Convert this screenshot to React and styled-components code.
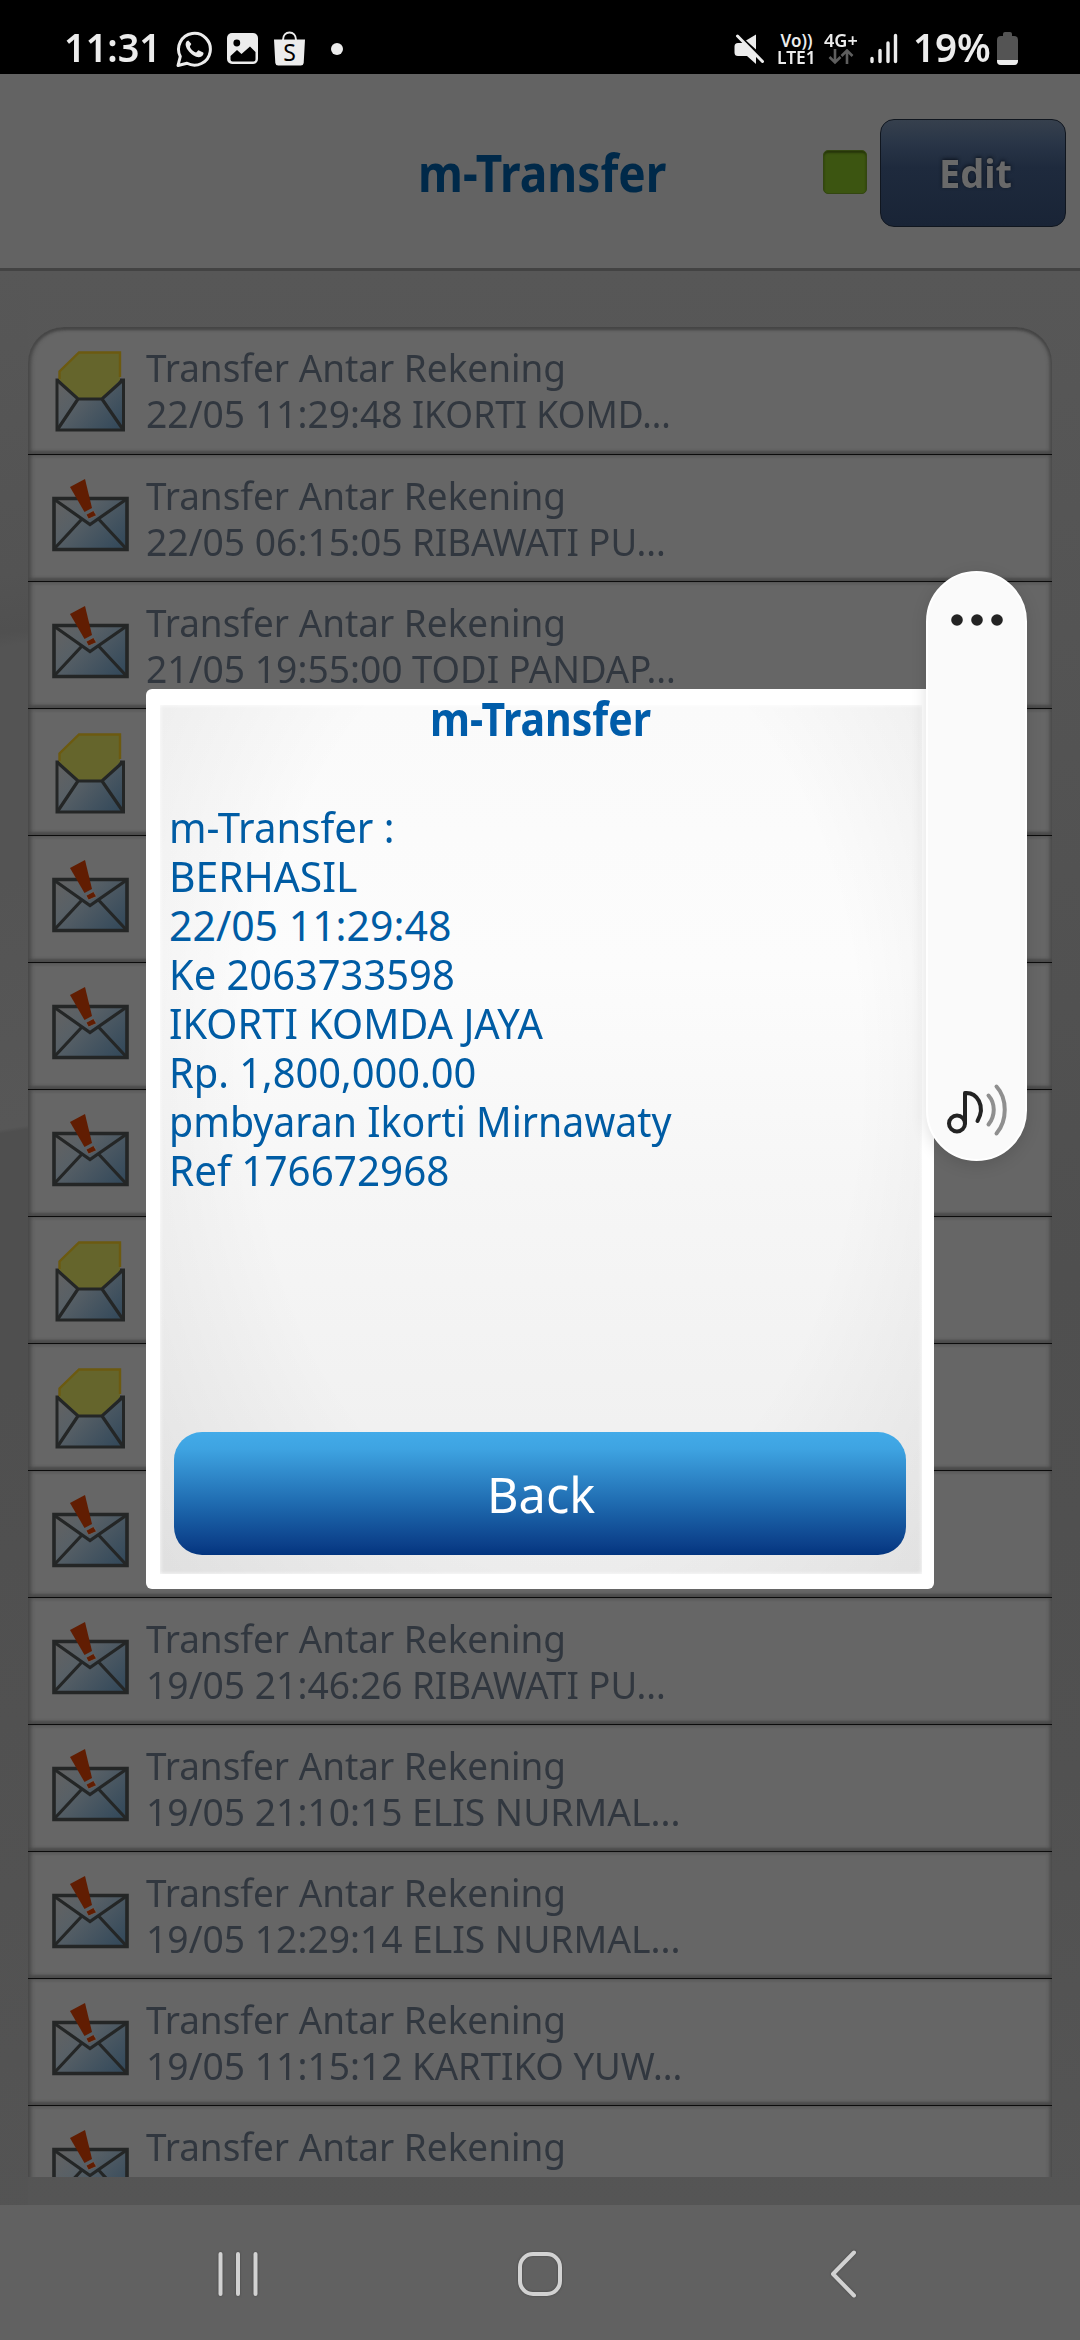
import React, { useLayoutEffect, useRef, useState } from 'react';
import styled, { createGlobalStyle, css } from 'styled-components';

const GlobalStyle = createGlobalStyle`
  * { box-sizing: border-box; }
  body { margin: 0; background: #000; font-family: "Noto Sans", "Open Sans", sans-serif; }
  svg { display: block; flex: none; }
`;

const Screen = styled.div`
  position: relative;
  width: 1080px;
  height: 2340px;
  overflow: hidden;
  display: flex;
  flex-direction: column;
`;

/* Text condensed to a given advance width */
const FitBox = styled.span`
  display: block;
  flex: none;
  width: ${(p) => p.$width}px;
  white-space: pre;
`;
const FitInner = styled.span`
  display: block;
  width: max-content;
  transform-origin: 0 50%;
`;
function Fit({ width, children }) {
  const ref = useRef(null);
  const [scale, setScale] = useState(1);
  useLayoutEffect(() => {
    setScale(width / ref.current.offsetWidth);
  }, [width, children]);
  return (
    <FitBox $width={width}>
      <FitInner ref={ref} style={{ transform: `scaleX(${scale})` }}>{children}</FitInner>
    </FitBox>
  );
}

/* ---------- status bar ---------- */
const StatusBar = styled.div`
  height: 74px;
  padding: 23px 62px 0 64px;
  display: flex;
  align-items: center;
  justify-content: space-between;
  background: #000;
  color: #ececec;
`;
const StatusGroup = styled.div`
  display: flex;
  align-items: center;
  gap: ${(p) => p.$gap}px;
  margin-left: ${(p) => p.$inset || 0}px;
`;
const StatusText = styled.div`
  font-size: 39px;
  line-height: 50px;
  font-weight: 600;
  margin-top: -3px;
`;
const Dot = styled.i`
  width: 12px;
  height: 12px;
  border-radius: 50%;
  background: #ececec;
  margin-left: 10px;
`;
const Tiny = styled.div`
  display: flex;
  flex-direction: column;
  align-items: center;
  font-size: 17px;
  line-height: 17px;
  font-weight: 600;
`;

/* ---------- header ---------- */
const Header = styled.header`
  height: 197px;
  background: #636363;
  border-bottom: 3px solid #434343;
  display: grid;
  grid-template-columns: 1fr auto 1fr;
  align-items: center;
  padding: 0 14px 0 17px;
`;
const Title = styled.h1`
  grid-column: 2;
  margin: 2px 0 0;
  color: #002949;
  font-size: 52px;
  line-height: 60px;
  font-weight: 700;
`;
const HeaderActions = styled.div`
  display: flex;
  justify-content: flex-end;
  align-items: center;
  gap: 13px;
`;
const Indicator = styled.div`
  width: 44px;
  height: 44px;
  margin-top: 2px;
  border-radius: 5px;
  background: #3c5511;
  border: 1px solid #334611;
  box-shadow: inset 0 2px 2px #26350a;
`;
const EditButton = styled.button`
  width: 186px;
  height: 108px;
  margin-top: 4px;
  padding: 0 0 0 5px;
  border: 1px solid #10161f;
  border-radius: 14px;
  background: linear-gradient(#36404d 0%, #293547 22%, #1e2a3d 45%, #192436 100%);
  color: #696969;
  font: 700 40px/54px "Noto Sans", sans-serif;
  text-shadow: 0 -1px 4px #0c121c;
  text-align: left;
  display: flex;
  align-items: center;
  justify-content: center;
`;

/* ---------- message list ---------- */
const Content = styled.main`
  flex: none;
  height: 1934px;
  padding: 56px 28px 28px;
  background:
    linear-gradient(171deg, #575757 0, #535353 300px, #505050 358px, #545454 372px, #545454 600px, #575757 848px, #4f4f4f 852px, #4f4f4f 1100px, #545454 1934px) 0 0 / 28px 100% no-repeat,
    linear-gradient(#575757 0, #525252 600px, #4f4f4f 1000px, #515151 1500px, #555 1934px);
`;
const List = styled.ul`
  height: 1850px;
  margin: 0;
  padding: 0;
  list-style: none;
  overflow: hidden;
  border-radius: 36px 36px 0 0;
`;
const Row = styled.li`
  height: 127px;
  display: flex;
  background: #666;
  border-bottom: 1px solid #0c0c0c;
  box-shadow: inset 4px 0 4px -1px #484848, inset -3px 0 4px -1px #484848, inset 0 -3px 3px #4c4c4c;
  ${(p) => p.$first && css`
    height: 128px;
    border-radius: 36px 36px 0 0;
    box-shadow: inset 4px 0 4px -1px #484848, inset -3px 0 4px -1px #484848, inset 0 -3px 3px #4c4c4c,
      inset 0 3px 3px #444;
  `}
`;
const RowIcon = styled.div`
  width: 118px;
  flex: none;
  padding: ${(p) => (p.$open ? 22 : 23)}px 0 0 22px;
`;
const RowText = styled.div`
  padding-top: 17px;
  color: #31373f;
  font-size: 39px;
  line-height: 46px;
`;
const RowDetail = styled.div`
  display: flex;
  gap: 9px;
`;

/* ---------- navigation bar ---------- */
const NavBar = styled.nav`
  flex: 1;
  background: #616161;
  padding: 2px 87px 0 87px;
  display: grid;
  grid-template-columns: repeat(3, 1fr);
  place-items: center;
  svg { filter: drop-shadow(0 0 1px #444); }
`;

/* ---------- dialog ---------- */
const Dialog = styled.section`
  position: absolute;
  left: 146px;
  top: 689px;
  width: 788px;
  height: 900px;
  padding: 16px 12px 15px 14px;
  background: #fff;
  border-radius: 6px;
`;
const DialogPanel = styled.div`
  height: 100%;
  display: flex;
  flex-direction: column;
  padding: 0 16px 19px 14px;
  background:
    radial-gradient(ellipse 72% 95% at 52% 42%, rgba(0,0,0,0) 55%, rgba(0,0,0,.07) 100%),
    linear-gradient(#fafafa, #fcfcfc 30%, #f6f6f6 55%, #eee 100%);
  box-shadow: inset 0 0 4px #fff;
`;
const DialogTitle = styled.h2`
  margin: -12px 0 0 1px;
  align-self: center;
  color: #005ca9;
  font-size: 46px;
  line-height: 50px;
  font-weight: 700;
`;
const DialogBody = styled.div`
  margin: 60px 0 0 -5px;
  color: #005ca4;
  font-size: 41px;
  line-height: 49px;
`;
const BackButton = styled.button`
  margin-top: auto;
  height: 123px;
  flex: none;
  border: 0;
  border-radius: 28px;
  background: linear-gradient(#42abe9 0%, #3ea3e1 14%, #1f6bb0 58%, #0b3f89 92%, #02347e 100%);
  color: #fff;
  font: 400 50px/68px "Noto Sans", sans-serif;
  text-align: left;
  display: flex;
  align-items: center;
  justify-content: center;
  padding: 0 0 0 2px;
`;

/* ---------- floating volume panel ---------- */
const VolumePill = styled.aside`
  position: absolute;
  left: 926px;
  top: 571px;
  width: 101px;
  height: 590px;
  border-radius: 51px;
  border: 2px solid #fff;
  background: #fafafa;
  box-shadow: 0 4px 16px rgba(0, 0, 0, .13);
  display: flex;
  flex-direction: column;
  justify-content: space-between;
  align-items: center;
  padding: 41px 0 22px;
`;

function WhatsAppIcon() {
  return (
    <svg width="36" height="38" viewBox="0 0 36 38" fill="none">
      <path d="M2 35.5 4.300 26.500A15.900 15.900 0 1 1 11 33.300Z" stroke="#ececec" strokeWidth="3" strokeLinejoin="round" />
      <path d="M12.300 10.500c-3.500 1-3.500 5.500-.3 9.800 3.500 5 9.500 8.200 13 6.500 2.300-1.100 3-3.500 2.200-4.200l-4.200-2.200c-1-.4-2 2-2.900 2-2 0-6.200-4.300-6.200-6 0-.8 1.600-1.500 1.300-2.600Z" fill="#ececec" />
    </svg>
  );
}
function PictureIcon() {
  return (
    <svg width="32" height="32" viewBox="0 0 32 32">
      <rect width="31" height="31" rx="5" fill="#ececec" />
      <circle cx="9.800" cy="10" r="3.400" fill="#000" />
      <path d="M3.500 23 10 17l4.500 4 8.500-7.500 5.500 5.500v7.500a2 2 0 0 1-2 2h-21a2 2 0 0 1-2-2Z" fill="#000" />
    </svg>
  );
}
function BagIcon() {
  return (
    <svg width="32" height="36" viewBox="0 0 32 36">
      <path d="M9 9C9 4 12 1.500 15.500 1.500S22 4 22 9" fill="none" stroke="#ececec" strokeWidth="2" />
      <path d="M0 8.500h31l-1.300 23.500a3 3 0 0 1-3 2.500h-22.400a3 3 0 0 1-3-2.500Z" fill="#ececec" />
      <text x="15.500" y="29.500" textAnchor="middle" fontFamily="Noto Sans" fontSize="23" fill="#000">S</text>
    </svg>
  );
}
function MuteIcon() {
  return (
    <svg width="31" height="32" viewBox="0 0 31 32" fill="#ececec">
      <path d="M12 7.500 22 1.500v15Z" />
      <path d="M4 10h6l12 13v8l-9-8H4a3.500 3.500 0 0 1-3.500-3.500v-6A3.500 3.500 0 0 1 4 10Z" />
      <path d="M3.500 3 28.500 28.500" stroke="#ececec" strokeWidth="3" strokeLinecap="round" />
    </svg>
  );
}
function DataArrows() {
  return (
    <svg width="26" height="16" viewBox="0 0 26 16" fill="none" stroke="#5e5e5e" strokeWidth="2.600">
      <path d="M7 0v13M1.500 8 7 13.500 12.500 8M19 15V2M13.500 7 19 1.500 24.500 7" />
    </svg>
  );
}
function SignalIcon() {
  return (
    <svg width="28" height="31" viewBox="0 0 28 31" stroke="#ececec" strokeWidth="3.400" strokeLinecap="round">
      <path d="M2 25.500v3M10 17.500v11M18 10v18.500M25.500 2.500v26" />
    </svg>
  );
}
function BatteryIcon() {
  return (
    <svg width="21" height="33" viewBox="0 0 21 33">
      <path d="M6 2a2 2 0 0 1 2-2h5a2 2 0 0 1 2 2v2h2a4 4 0 0 1 4 4v21a4 4 0 0 1-4 4H4a4 4 0 0 1-4-4V8a4 4 0 0 1 4-4h2Z" fill="#545454" />
      <path d="M0 28h21v1a4 4 0 0 1-4 4H4a4 4 0 0 1-4-4Z" fill="#ececec" />
    </svg>
  );
}

function OpenEnvelope() {
  return (
    <svg width="80" height="84" viewBox="0 0 80 84">
      <path d="M7 31h66.500v50h-66.500Z" fill="url(#envelopeFill)" stroke="#242626" strokeWidth="3" />
      <path d="M9 29 9 22 29 3.500H70V31L52 50H29L9 31Z" fill="#65652c" />
      <path d="M9.500 30V22.500L29 3.500H70V28" fill="none" stroke="#6c5a10" strokeWidth="2.400" />
      <path d="M7 31 28 50H52L73 31M28 50 7.500 80.500M52 50 73 80.500" fill="none" stroke="#242626" strokeWidth="3.200" />
    </svg>
  );
}
function AlertEnvelope() {
  return (
    <svg width="82" height="78" viewBox="0 0 82 78">
      <path d="M4 20.500h73v51h-73Z" fill="url(#envelopeFill)" stroke="#242626" strokeWidth="3.600" />
      <path d="M4.500 21.500 40 46.500 76 21.500M31.500 41.500 4.500 70.500M49 41.500 76 70.500" fill="none" stroke="#242626" strokeWidth="3.200" />
      <path d="M20 9 35 1 42 30 34.500 34Z" fill="#611d02" />
      <path d="M36 36.500 43.500 32.500 46.500 37.500 38.500 41Z" fill="#611d02" stroke="#666" strokeWidth=".8" />
    </svg>
  );
}
const Defs = styled.svg`
  position: absolute;
`;
function IconGradients() {
  return (
    <Defs width="0" height="0">
      <defs>
        <linearGradient id="envelopeFill" x1="0" y1=".1" x2="1" y2=".8">
          <stop offset="0" stopColor="#626262" />
          <stop offset=".35" stopColor="#586066" />
          <stop offset="1" stopColor="#354a5b" />
        </linearGradient>
      </defs>
    </Defs>
  );
}

const messages = [
  { open: true, date: '22/05 11:29:48', name: 'IKORTI KOMD...', width: 259 },
  { date: '22/05 06:15:05', name: 'RIBAWATI PU...', width: 254 },
  { date: '21/05 19:55:00', name: 'TODI PANDAP...', width: 264 },
  { open: true },
  {},
  {},
  {},
  { open: true },
  { open: true },
  {},
  { date: '19/05 21:46:26', name: 'RIBAWATI PU...', width: 254 },
  { date: '19/05 21:10:15', name: 'ELIS NURMAL...', width: 268 },
  { date: '19/05 12:29:14', name: 'ELIS NURMAL...', width: 268 },
  { date: '19/05 11:15:12', name: 'KARTIKO YUW...', width: 270 },
  { titleOnly: true },
];

const receipt = [
  ['m-Transfer :', 226],
  ['BERHASIL', 188],
  ['22/05 11:29:48', 282],
  ['Ke 2063733598', 286],
  ['IKORTI KOMDA JAYA', 374],
  ['Rp. 1,800,000.00', 307],
  ['pmbyaran Ikorti Mirnawaty', 503],
  ['Ref 176672968', 280],
];

export default function App() {
  return (
    <Screen>
      <GlobalStyle />
      <IconGradients />
      <StatusBar>
        <StatusGroup $gap={15}>
          <StatusText><Fit width={97}>11:31</Fit></StatusText>
          <WhatsAppIcon />
          <PictureIcon />
          <BagIcon />
          <Dot />
        </StatusGroup>
        <StatusGroup $gap={12}>
          <MuteIcon />
          <StatusGroup $gap={8}>
            <Tiny><Fit width={32}>Vo))</Fit><Fit width={39}>LTE1</Fit></Tiny>
            <Tiny><Fit width={34}>4G+</Fit><DataArrows /></Tiny>
          </StatusGroup>
          <SignalIcon />
          <StatusGroup $gap={6} $inset={3}>
            <StatusText><Fit width={78}>19%</Fit></StatusText>
            <BatteryIcon />
          </StatusGroup>
        </StatusGroup>
      </StatusBar>

      <Header>
        <Title><Fit width={248}>m-Transfer</Fit></Title>
        <HeaderActions>
          <Indicator />
          <EditButton><Fit width={73}>Edit</Fit></EditButton>
        </HeaderActions>
      </Header>

      <Content>
        <List>
          {messages.map((m, i) => (
            <Row key={i} $first={i === 0}>
              <RowIcon $open={m.open}>{m.open ? <OpenEnvelope /> : <AlertEnvelope />}</RowIcon>
              {(m.date || m.titleOnly) && (
                <RowText>
                  <Fit width={420}>Transfer Antar Rekening</Fit>
                  {m.date && (
                    <RowDetail>
                      <Fit width={257}>{m.date}</Fit>
                      <Fit width={m.width}>{m.name}</Fit>
                    </RowDetail>
                  )}
                </RowText>
              )}
            </Row>
          ))}
        </List>
      </Content>

      <NavBar>
        <svg width="42" height="46" viewBox="0 0 42 46" stroke="#d2d2d2" strokeWidth="4" strokeLinecap="round">
          <path d="M3.500 3v40M21 3v40M38.500 3v40" />
        </svg>
        <svg width="46" height="46" viewBox="0 0 46 46" fill="none" stroke="#d2d2d2" strokeWidth="4">
          <rect x="3" y="3" width="40" height="40" rx="13" />
        </svg>
        <svg width="30" height="50" viewBox="0 0 30 50" fill="none" stroke="#d2d2d2" strokeWidth="4" strokeLinecap="round" strokeLinejoin="round">
          <path d="M27 3.500 6 25 27 46.500" />
        </svg>
      </NavBar>

      <Dialog>
        <DialogPanel>
          <DialogTitle><Fit width={221}>m-Transfer</Fit></DialogTitle>
          <DialogBody>
            {receipt.map(([text, width]) => <Fit key={text} width={width}>{text}</Fit>)}
          </DialogBody>
          <BackButton><Fit width={108}>Back</Fit></BackButton>
        </DialogPanel>
      </Dialog>

      <VolumePill>
        <svg width="52" height="12" viewBox="0 0 52 12" fill="#232323">
          <circle cx="6" cy="6" r="5.800" /><circle cx="26" cy="6" r="5.800" /><circle cx="46" cy="6" r="5.800" />
        </svg>
        <svg width="62" height="54" viewBox="0 0 62 54" fill="none" strokeLinecap="round" strokeWidth="4">
          <g stroke="#232323">
            <circle cx="11" cy="40.500" r="8" />
            <path d="M19 40V10c12-1 21 13 12.500 28" strokeLinejoin="round" />
          </g>
          <path d="M42.500 12.500c7 8 7 20 0 29M50.500 3.500c11 12 11 34 0 47" stroke="#8f8f8f" />
        </svg>
      </VolumePill>
    </Screen>
  );
}
